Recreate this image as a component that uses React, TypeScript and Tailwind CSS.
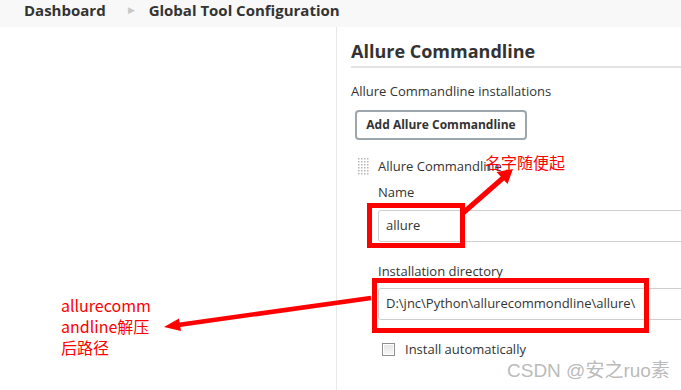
import React from "react";

const cjk = "font-['Microsoft_YaHei','Noto_Sans_CJK_SC',sans-serif]";

function DragHandle() {
  const dots = [];
  for (let r = 0; r < 6; r++) {
    for (let c = 0; c < 4; c++) {
      dots.push(<rect key={`${r}-${c}`} x={c * 3} y={r * 3} width="1.5" height="1.5" fill="#b5b5b5" />);
    }
  }
  return (
    <svg width="12" height="18" viewBox="0 0 12 18" className="shrink-0">
      {dots}
    </svg>
  );
}

function Annotations() {
  return (
    <svg className="absolute inset-0 pointer-events-none" width="681" height="390" viewBox="0 0 681 390">
      <rect x="369.5" y="205.5" width="93" height="40" fill="none" stroke="#ff0000" strokeWidth="5" />
      <rect x="374.5" y="280.5" width="272" height="50" fill="none" stroke="#ff0000" strokeWidth="5" />
      <line x1="463" y1="213" x2="503" y2="178" stroke="#ff0000" strokeWidth="5" />
      <polygon points="513,169 507.5,184 496.5,172" fill="#ff0000" />
      <line x1="371" y1="298" x2="178" y2="325" stroke="#ff0000" strokeWidth="4.5" />
      <polygon points="164,327 181,331 179,318.5" fill="#ff0000" />
    </svg>
  );
}

export default function App() {
  return (
    <div className="relative w-[681px] h-[390px] overflow-hidden bg-white font-['Open_Sans','Noto_Sans',sans-serif] text-[#333]">
      <div className="h-[27px] bg-[#f8f8f8] flex items-start pl-[24px]">
        <span className="text-[15px] leading-[20px] font-bold text-[#333]">Dashboard</span>
        <span className="ml-[22px] text-[9px] leading-[20px] text-[#c8c8c8]">▶</span>
        <span className="ml-[14px] text-[15px] leading-[20px] font-bold text-[#333]">Global Tool Configuration</span>
      </div>

      <div className="flex h-[363px]">
        <div className={`w-[337px] shrink-0 border-r border-[#e8e8e8] pl-[61px] pt-[268px] text-[16px] leading-[21px] text-[#ff0000] ${cjk}`}>
          allurecomm
          <br />
          andline解压
          <br />
          后路径
        </div>

        <div className="flex-1 pl-[14px] min-w-0">
          <h2 className="mt-[12px] pb-[3px] text-[18px] leading-[24px] font-bold text-[#333] border-b-[2px] border-[#e2e2e2]">
            Allure Commandline
          </h2>
          <div className="mt-[14px] text-[13px] leading-[18px]">Allure Commandline installations</div>
          <button className="mt-[10px] ml-[4px] w-[172px] h-[30px] border-[2px] border-[#9ea6ad] rounded-[4px] bg-white text-[12px] font-bold text-[#333]">
            Add Allure Commandline
          </button>

          <div className="mt-[18px] flex items-start">
            <div className="ml-[7px] mr-[8px]">
              <DragHandle />
            </div>
            <div className="flex-1 min-w-0">
              <div className="-mt-[1px] text-[13px] leading-[18px]">Allure Commandline</div>
              <div className="mt-[8px] text-[13px] leading-[18px]">Name</div>
              <div className="mt-[9px] w-[340px] h-[32px] border border-[#cfcfcf] rounded-[3px] pl-[7px] flex items-center text-[13px]">
                allure
              </div>
              <div className="mt-[20px] text-[13px] leading-[18px]">Installation directory</div>
              <div className="mt-[8px] w-[340px] h-[32px] border border-[#cfcfcf] rounded-[3px] pl-[7px] flex items-center text-[13px]">
                D:\jnc\Python\allurecommondline\allure\
              </div>
              <div className="mt-[20px] flex items-center">
                <span className="ml-[4px] w-[13px] h-[13px] border border-[#8f8f8f] bg-gradient-to-b from-[#e4e4e4] to-[#f8f8f8] shadow-[inset_0_0_0_1px_#fff]" />
                <span className="ml-[10px] text-[13px] leading-[18px]">Install automatically</span>
              </div>
            </div>
          </div>
        </div>
      </div>

      <div className={`absolute left-[485px] top-[152px] text-[16px] leading-[20px] text-[#ff0000] ${cjk}`}>名字随便起</div>

      <Annotations />

      <div className="absolute left-[507px] top-[359px] text-[19px] leading-[24px] text-[#a8a8a8]/80 font-['Liberation_Sans','Noto_Sans_CJK_SC',sans-serif] [text-shadow:0_0_2px_#fff]">
        CSDN @安之ruo素
      </div>
    </div>
  );
}
